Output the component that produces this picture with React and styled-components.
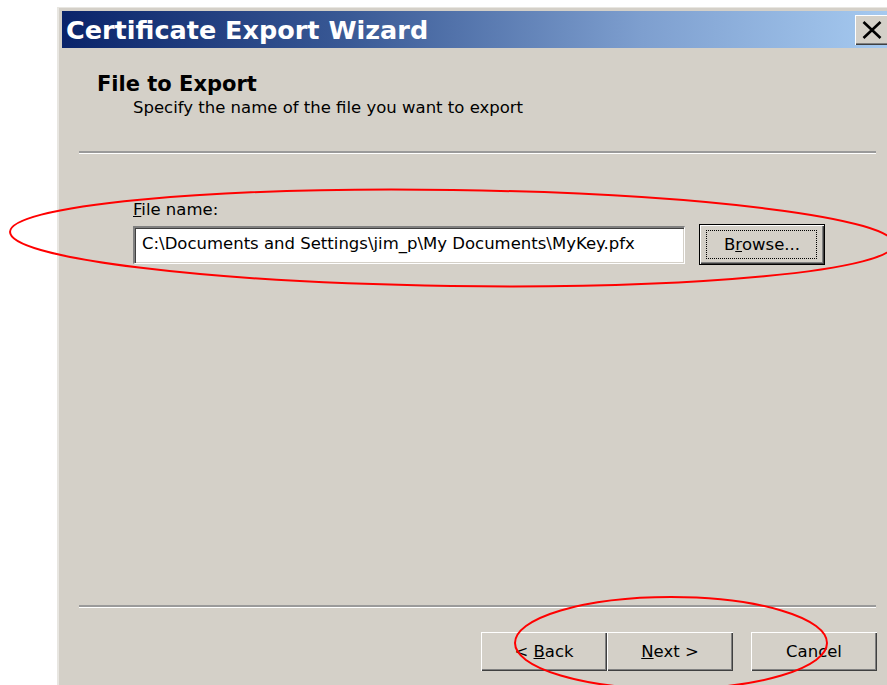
import React from "react";
import styled, { createGlobalStyle } from "styled-components";

const FONT = `"DejaVu Sans", "Liberation Sans", sans-serif`;

const GlobalStyle = createGlobalStyle`
  html, body {
    margin: 0;
    padding: 0;
    background: #ffffff;
    overflow: hidden;
  }
  body {
    font-family: ${FONT};
    color: #000;
  }
`;

const Stage = styled.div`
  position: relative;
  width: 887px;
  height: 685px;
  overflow: hidden;
  background: #fff;
`;

const Window = styled.div`
  margin: 7px 0 0 57px;
  width: 838px;
  height: 700px;
  box-sizing: border-box;
  background: #d4d0c8;
  border-top: 1px solid #e8e6e1;
  border-left: 2px solid #e8e6e1;
  padding: 3px 4px 0 3px;
  display: flex;
  flex-direction: column;
`;

const TitleBar = styled.div`
  height: 37px;
  flex: none;
  display: flex;
  align-items: center;
  justify-content: space-between;
  padding: 0 2px 0 4px;
  background: linear-gradient(to right, #0a246a 0%, #3a5a96 35%, #7e9fcf 70%, #a6caf0 100%);
`;

const TitleText = styled.span`
  font-family: ${FONT};
  font-weight: bold;
  font-size: 25.5px;
  color: #fff;
  white-space: nowrap;
`;

const CloseButton = styled.div`
  width: 34px;
  height: 30px;
  box-sizing: border-box;
  background: #d4d0c8;
  box-shadow: inset 1px 1px #ffffff, inset -1px -1px #404040, inset -2px -2px #808080;
  display: flex;
  align-items: center;
  justify-content: center;
`;

const Body = styled.div`
  flex: 1;
  display: flex;
  flex-direction: column;
  padding: 0 15px 0 17px;
`;

const Header = styled.div`
  height: 103px;
  box-sizing: border-box;
  padding: 23px 0 0 18px;
`;

const HeaderTitle = styled.div`
  font-family: ${FONT};
  font-weight: bold;
  font-size: 21px;
  line-height: 26px;
`;

const HeaderSubtitle = styled.div`
  font-family: ${FONT};
  font-size: 16.5px;
  line-height: 20px;
  margin-top: 1px;
  padding-left: 36px;
`;

const Separator = styled.div`
  height: 0;
  border-top: 2px solid #9a9a9a;
  border-bottom: 1px solid #ffffff;
`;

const Content = styled.div`
  height: 451px;
  box-sizing: border-box;
  padding: 46px 0 0 54px;
`;

const Label = styled.div`
  font-family: ${FONT};
  font-size: 16.5px;
  line-height: 20px;
`;

const FieldRow = styled.div`
  display: flex;
  align-items: center;
  gap: 14px;
  margin-top: 4px;
`;

const TextBox = styled.div`
  width: 552px;
  height: 38px;
  box-sizing: border-box;
  background: #fff;
  border-top: 2px solid #808080;
  border-left: 2px solid #808080;
  border-bottom: 1px solid #ffffff;
  border-right: 1px solid #ffffff;
  box-shadow: inset 1px 1px #404040, inset -1px -1px #d4d0c8;
  padding: 0 0 3px 7px;
  display: flex;
  align-items: center;
  font-family: ${FONT};
  font-size: 16.5px;
  white-space: nowrap;
`;

const Button = styled.div`
  position: relative;
  width: 126px;
  height: ${(p) => (p.$tall ? 41 : 39)}px;
  box-sizing: border-box;
  flex: none;
  background: #d4d0c8;
  display: flex;
  align-items: center;
  justify-content: center;
  font-family: ${FONT};
  font-size: 16.5px;
  white-space: pre;
  margin-left: ${(p) => p.$gap || 0}px;
  border: ${(p) => (p.$default ? "1px solid #000" : "none")};
  box-shadow: inset 1px 1px #ffffff, inset -1px -1px #404040, inset -2px -2px #808080;

  &::after {
    content: "";
    display: ${(p) => (p.$default ? "block" : "none")};
    position: absolute;
    inset: 5px 7px 5px 6px;
    border: 1px dotted #000;
  }
`;

const Footer = styled.div`
  display: flex;
  justify-content: flex-end;
  padding: 24px 0 0 0;
  margin-right: -1px;
`;

const Marks = styled.svg`
  position: absolute;
  left: 0;
  top: 0;
  pointer-events: none;
`;

function CloseGlyph() {
  return (
    <svg width="20" height="18" viewBox="0 0 20 18">
      <path d="M1.5 1 L18.5 17 M18.5 1 L1.5 17" stroke="#000" strokeWidth="2.6" fill="none" />
    </svg>
  );
}

export default function App() {
  return (
    <>
      <GlobalStyle />
      <Stage>
        <Window>
          <TitleBar>
            <TitleText>Certificate Export Wizard</TitleText>
            <CloseButton>
              <CloseGlyph />
            </CloseButton>
          </TitleBar>
          <Body>
            <Header>
              <HeaderTitle>File to Export</HeaderTitle>
              <HeaderSubtitle>Specify the name of the file you want to export</HeaderSubtitle>
            </Header>
            <Separator />
            <Content>
              <Label>
                <u>F</u>ile name:
              </Label>
              <FieldRow>
                <TextBox>C:\Documents and Settings\jim_p\My Documents\MyKey.pfx</TextBox>
                <Button $default $tall>
                  B<u>r</u>owse...
                </Button>
              </FieldRow>
            </Content>
            <Separator />
            <Footer>
              <Button>
                {"< "}
                <u>B</u>ack
              </Button>
              <Button>
                <u>N</u>ext{" >"}
              </Button>
              <Button $gap={18}>Cancel</Button>
            </Footer>
          </Body>
        </Window>
        <Marks width="887" height="685" viewBox="0 0 887 685">
          <ellipse
            cx="452"
            cy="238"
            rx="442"
            ry="48"
            transform="rotate(0.8 452 238)"
            fill="none"
            stroke="#ff0000"
            strokeWidth="2"
          />
          <ellipse cx="671" cy="643" rx="156" ry="46" fill="none" stroke="#ff0000" strokeWidth="2" />
        </Marks>
      </Stage>
    </>
  );
}
